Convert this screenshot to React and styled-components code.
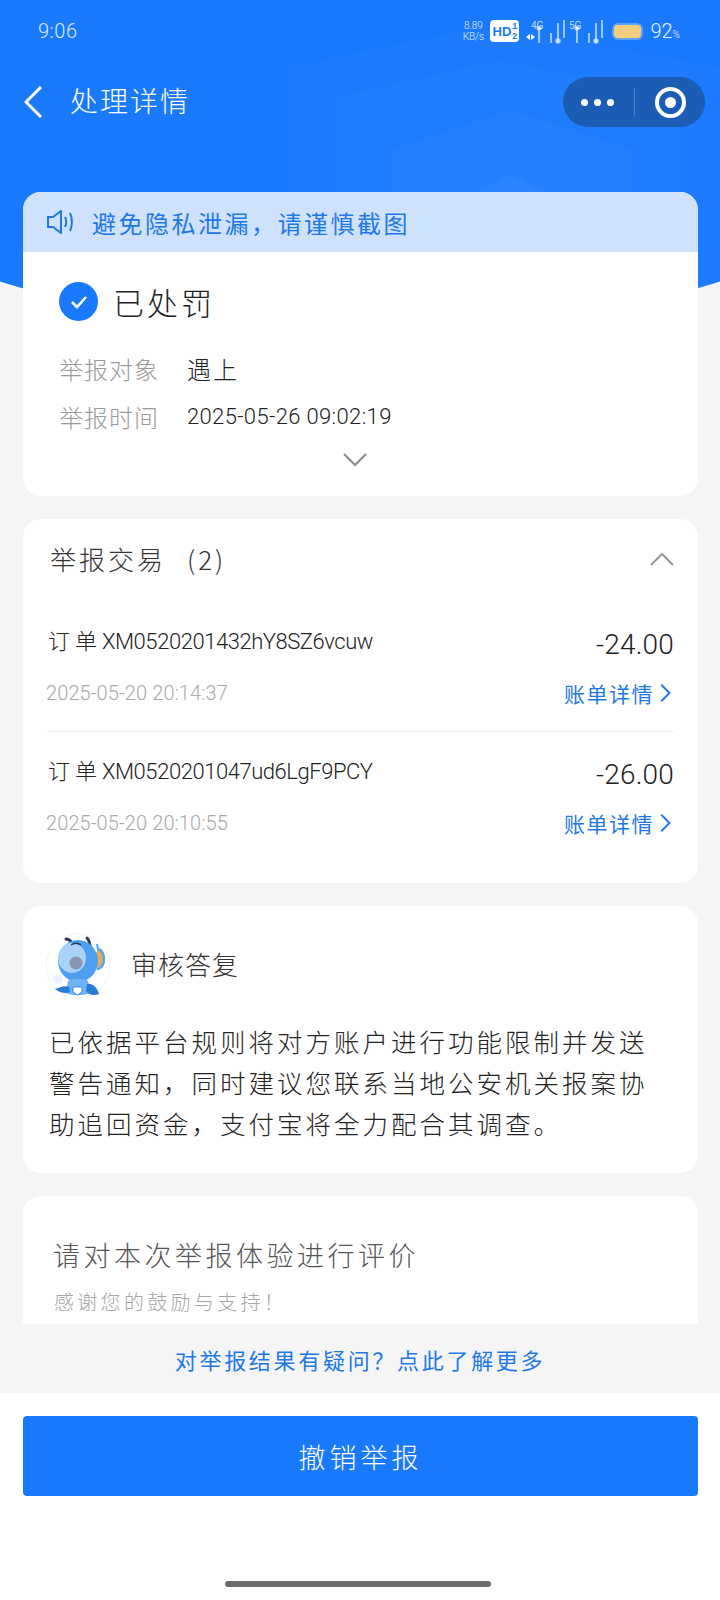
import React from "react";
import styled, { createGlobalStyle } from "styled-components";

const BLUE = "#1a7afe";
const LINK = "#1f78e8";

const GlobalStyle = createGlobalStyle`
  html, body {
    margin: 0;
    padding: 0;
    background: #fff;
  }
  * {
    box-sizing: border-box;
  }
  body {
    font-family: "Noto Sans CJK SC", Roboto, sans-serif;
    font-weight: 300;
    color: #333;
  }
`;

const Page = styled.div`
  position: relative;
  width: 720px;
  height: 1600px;
  overflow: hidden;
  display: flex;
  flex-direction: column;
  background: #f5f5f5;
`;

const HeaderBackdrop = styled.div`
  position: absolute;
  top: 0;
  left: -140px;
  width: 1000px;
  height: 329px;
  background: ${BLUE};
  border-radius: 0 0 50% 50% / 0 0 155px 155px;
  overflow: hidden;
`;

const BackdropShield = styled.svg`
  position: absolute;
  top: 0;
  left: 140px;
`;

const StatusBar = styled.div`
  position: relative;
  height: 62px;
  padding: 0 40px 0 38px;
  display: flex;
  align-items: center;
  justify-content: space-between;
  color: #fff;
`;

const Clock = styled.span`
  font-family: Roboto, sans-serif;
  font-size: 20px;
  font-weight: 300;
  letter-spacing: 0.5px;
  opacity: 0.85;
`;

const StatusIcons = styled.div`
  display: flex;
  align-items: center;
`;

const NetSpeed = styled.span`
  width: 22px;
  margin-right: 6px;
  display: flex;
  flex-direction: column;
  font-family: Roboto, sans-serif;
  font-size: 10px;
  line-height: 11px;
  text-align: center;
  opacity: 0.85;
`;

const HdBadge = styled.span`
  width: 29px;
  height: 22px;
  border-radius: 4px;
  background: #fff;
  color: ${BLUE};
  display: flex;
  align-items: center;
  justify-content: center;
  font-family: "Liberation Sans", sans-serif;
  font-size: 13px;
  font-weight: 700;
`;

const HdFraction = styled.span`
  display: flex;
  flex-direction: column;
  font-size: 9px;
  line-height: 10px;
  margin-left: 1px;
`;

const Signal = styled.svg`
  margin-left: ${(p) => p.$gap}px;
`;

const Battery = styled.span`
  width: 31px;
  height: 17px;
  margin-left: 8px;
  padding: 2px;
  border-radius: 6px;
  background: rgba(255, 255, 255, 0.3);
  display: flex;
`;

const BatteryFill = styled.span`
  flex: 1;
  border-radius: 4px;
  background: #f3cf7d;
`;

const BatteryText = styled.span`
  margin-left: 7px;
  font-family: Roboto, sans-serif;
  font-size: 20px;
  font-weight: 300;
  line-height: 1;
  opacity: 0.9;
  small {
    font-size: 10px;
  }
`;

const NavBar = styled.div`
  position: relative;
  margin-top: 15px;
  height: 50px;
  padding: 0 15px 0 24px;
  display: flex;
  align-items: center;
  color: #fff;
`;

const NavTitle = styled.h1`
  margin: 0 0 4px 28px;
  flex: 1;
  font-size: 28px;
  font-weight: 300;
  letter-spacing: 2px;
`;

const Capsule = styled.div`
  width: 142px;
  height: 50px;
  border-radius: 25px;
  background: #1b5cb4;
  display: grid;
  grid-template-columns: 71px 1px 70px;
  align-items: center;
  justify-items: center;
`;

const CapsuleDots = styled.div`
  display: flex;
  gap: 6px;
  margin-left: -2px;
  span {
    width: 7px;
    height: 7px;
    border-radius: 50%;
    background: #fff;
  }
`;

const CapsuleDivider = styled.div`
  width: 1px;
  height: 28px;
  background: rgba(255, 255, 255, 0.22);
`;

const CapsuleTarget = styled.div`
  width: 31px;
  height: 31px;
  border-radius: 50%;
  border: 4px solid #fff;
  display: flex;
  align-items: center;
  justify-content: center;
  &::after {
    content: "";
    width: 11px;
    height: 11px;
    border-radius: 50%;
    background: #fff;
  }
`;

const Content = styled.main`
  position: relative;
  height: 1132px;
  margin-top: 65px;
  padding: 0 22px 0 23px;
  overflow: hidden;
  display: flex;
  flex-direction: column;
  gap: 23px;
`;

const Card = styled.section`
  flex: none;
  background: #fff;
  border-radius: 18px;
  overflow: hidden;
`;

const Notice = styled.div`
  height: 60px;
  padding-left: 23px;
  display: flex;
  align-items: center;
  gap: 18px;
  background: #cfe2fd;
  color: ${LINK};
  font-size: 24px;
  font-weight: 400;
  letter-spacing: 2.5px;
`;

const StatusBody = styled.div`
  padding: 30px 36px 0;
  height: 244px;
`;

const StatusHead = styled.div`
  display: flex;
  align-items: center;
  gap: 15px;
  margin-bottom: 23px;
  font-size: 31px;
  line-height: 39px;
  letter-spacing: 3px;
  color: #222;
`;

const CheckDot = styled.span`
  width: 39px;
  height: 39px;
  border-radius: 50%;
  background: ${BLUE};
  display: flex;
  align-items: center;
  justify-content: center;
`;

const InfoRow = styled.div`
  height: 48px;
  display: flex;
  align-items: center;
`;

const InfoLabel = styled.span`
  width: 128px;
  font-size: 24px;
  letter-spacing: 1px;
  color: #9a9a9a;
`;

const InfoValue = styled.span`
  font-family: Roboto, "Noto Sans CJK SC", sans-serif;
  font-size: ${(p) => (p.$cjk ? 24 : 22)}px;
  font-weight: 300;
  letter-spacing: ${(p) => (p.$cjk ? 2 : 0.35)}px;
  color: #222;
`;

const Expand = styled.div`
  display: flex;
  justify-content: center;
  margin: 7px 0 0 -12px;
`;

const TradeHead = styled.div`
  height: 83px;
  padding: 0 0 4px 3px;
  display: flex;
  align-items: center;
  font-size: 26px;
  letter-spacing: 3px;
  color: #333;
`;

const TradeCount = styled.span`
  margin-left: 21px;
  flex: 1;
`;

const TradeCard = styled(Card)`
  padding: 0 24px 22px 24px;
`;

const Trade = styled.div`
  padding: 15px 0 12px;
  border-bottom: ${(p) => (p.$divided ? "1px solid #eeeeee" : "none")};
  height: ${(p) => (p.$divided ? 130 : 129)}px;
`;

const TradeLine = styled.div`
  height: ${(p) => p.$h}px;
  display: flex;
  align-items: center;
  justify-content: space-between;
`;

const OrderNo = styled.span`
  margin: 0 0 6px 1px;
  font-family: Roboto, "Noto Sans CJK SC", sans-serif;
  font-size: 22px;
  font-weight: 300;
  letter-spacing: -0.45px;
  color: #222;
`;

const OrderCjk = styled.span`
  font-family: "Noto Sans CJK SC", sans-serif;
  letter-spacing: 5px;
`;

const Amount = styled.span`
  margin-top: 4px;
  font-family: Roboto, sans-serif;
  font-size: 28px;
  font-weight: 300;
  letter-spacing: 0.2px;
  color: #222;
`;

const TradeTime = styled.span`
  font-family: Roboto, sans-serif;
  font-size: 20px;
  font-weight: 300;
  letter-spacing: 0.1px;
  color: #a8a8a8;
  margin-left: -1px;
`;

const BillLink = styled.a`
  display: flex;
  align-items: center;
  gap: 2px;
  font-size: 21px;
  font-weight: 400;
  letter-spacing: 1.5px;
  color: ${LINK};
`;

const ReplyCard = styled(Card)`
  padding: 26px 30px 30px 22px;
`;

const ReplyHead = styled.div`
  display: flex;
  align-items: center;
  gap: 16px;
  margin-bottom: 20px;
  font-size: 26px;
  letter-spacing: 1px;
  color: #333;
`;

const ReplyTitle = styled.span`
  margin-bottom: 6px;
`;

const ReplyText = styled.p`
  margin: 0 0 0 4px;
  font-size: 25.5px;
  line-height: 41px;
  letter-spacing: 3px;
  color: #222;
`;

const RateCard = styled(Card)`
  flex: 1;
  padding: 40px 30px 0;
  border-radius: 18px 18px 0 0;
`;

const RateTitle = styled.div`
  font-size: 27px;
  line-height: 38px;
  letter-spacing: 3.5px;
  color: #555;
`;

const RateHint = styled.div`
  margin: 12px 0 0 1px;
  font-size: 20px;
  line-height: 32px;
  letter-spacing: 3.3px;
  color: #a6a6a6;
`;

const HelpLink = styled.a`
  position: relative;
  height: 69px;
  display: flex;
  align-items: center;
  justify-content: center;
  font-size: 22px;
  font-weight: 400;
  letter-spacing: 2.7px;
  color: ${LINK};
`;

const Footer = styled.footer`
  position: relative;
  flex: 1;
  padding: 23px 22px 13px 23px;
  display: flex;
  flex-direction: column;
  background: #fff;
`;

const RevokeButton = styled.button`
  height: 80px;
  border: 0;
  border-radius: 4px;
  background: ${BLUE};
  color: #fff;
  font-family: inherit;
  font-size: 27px;
  font-weight: 300;
  letter-spacing: 4px;
`;

const HomeBar = styled.div`
  width: 266px;
  height: 6px;
  margin: auto 0 0 202px;
  border-radius: 3px;
  background: #6b6b6b;
`;

// one network: generation label, bars and the glow on the active bars
function SignalMeter({ label, gap, arrows }) {
  const left = arrows ? 13 : 10;
  const bars = [
    [left, 9, 25],
    [left + 12, 15, 25],
    [left + 19, 5, 25],
    [left + 25, 2, 20],
  ];
  return (
    <Signal $gap={gap} width={left + 27} height="26" viewBox={`0 0 ${left + 27} 26`}>
      <text x={left - 8} y="11" fill="#fff" fontSize="10" fontFamily="Roboto, sans-serif">
        {label}
      </text>
      {arrows && (
        <g fill="#fff">
          <path d="M0 19l4-3v6z" />
          <path d="M9 19l-4 3v-6z" />
        </g>
      )}
      {bars.map(([x, y1, y2]) => (
        <line key={x} x1={x} x2={x} y1={y1} y2={y2} stroke="#fff" strokeWidth="1.3" opacity="0.9" />
      ))}
      <circle cx={left} cy="10" r="2.6" fill="#fff" opacity="0.6" />
      <circle cx={left + 19} cy="23" r="2.8" fill="#fff" opacity="0.6" />
    </Signal>
  );
}

// the faint nested shields printed on the blue header
function HeaderShield() {
  return (
    <BackdropShield width="720" height="330" viewBox="0 0 720 330" fill="#fff">
      <path d="M289 67L490 25L720 67V330H289Z" opacity="0.012" />
      <path d="M335 97L500 60L680 97V330H335Z" opacity="0.015" />
      <path d="M390 150L510 110L632 150V330H390Z" opacity="0.02" />
      <path d="M475 192L510 175L545 192V330H475Z" opacity="0.04" />
    </BackdropShield>
  );
}

function Mascot() {
  return (
    <svg width="70" height="68" viewBox="0 0 70 68">
      <circle cx="33" cy="34" r="32" fill="#fff" stroke="#f1f3f6" />
      <path d="M21 7c3 0 6 3 8 7M42 6c2 2 3 5 3 10" fill="none" stroke="#2b3a55" strokeWidth="3" strokeLinecap="round" />
      <path d="M52 12l2 10" stroke="#4d9df2" strokeWidth="2" />
      <ellipse cx="55" cy="27" rx="5" ry="10" fill="#e6ad5a" />
      <path d="M52 17a7 10 0 0 1 0 20" fill="none" stroke="#5aa6ef" strokeWidth="2.5" />
      <ellipse cx="33" cy="29" rx="20" ry="21" fill="#4f9ff0" />
      <ellipse cx="27" cy="26" rx="14" ry="15" fill="#a9d3f9" />
      <circle cx="31" cy="31" r="6.5" fill="#8895ad" />
      <path d="M26 13c3-2 7-2 10 0" fill="none" stroke="#2b3a55" strokeWidth="1.5" />
      <path d="M23 49c4-3 16-3 20 0l2 12c-7 3-18 3-24 0z" fill="#6db2f3" />
      <path d="M24 55c-4-2-10 1-14 2 5 4 11 5 15 3z" fill="#2a79d4" />
      <path d="M42 52c5-1 10 3 12 10-5 2-10 1-13-3z" fill="#2a79d4" />
      <path d="M28 55h9v5l-4.500 3-4.500-3z" fill="#fff" stroke="#3d8ee0" />
      <circle cx="13" cy="47" r="5" fill="#eaf3fc" />
    </svg>
  );
}

function Chevron({ size = 24, points, color = "#8a8a8a", width = 2 }) {
  return (
    <svg width={size} height={size} viewBox="0 0 24 24" fill="none">
      <polyline points={points} stroke={color} strokeWidth={width} />
    </svg>
  );
}

const trades = [
  {
    order: "XM0520201432hY8SZ6vcuw",
    amount: "-24.00",
    time: "2025-05-20 20:14:37",
  },
  {
    order: "XM0520201047ud6LgF9PCY",
    amount: "-26.00",
    time: "2025-05-20 20:10:55",
  },
];

export default function App() {
  return (
    <Page>
      <GlobalStyle />
      <HeaderBackdrop>
        <HeaderShield />
      </HeaderBackdrop>

      <StatusBar>
        <Clock>9:06</Clock>
        <StatusIcons>
          <NetSpeed>
            <span>8.89</span>
            <span>KB/s</span>
          </NetSpeed>
          <HdBadge>
            HD
            <HdFraction>
              <span>1</span>
              <span>2</span>
            </HdFraction>
          </HdBadge>
          <SignalMeter label="4G" gap={7} arrows />
          <SignalMeter label="5G" gap={1} />
          <Battery>
            <BatteryFill />
          </Battery>
          <BatteryText>
            92<small>%</small>
          </BatteryText>
        </StatusIcons>
      </StatusBar>

      <NavBar>
        <svg width="18" height="32" viewBox="0 0 18 32" fill="none">
          <polyline points="17,1 2,16 17,31" stroke="#fff" strokeWidth="3" />
        </svg>
        <NavTitle>处理详情</NavTitle>
        <Capsule>
          <CapsuleDots>
            <span />
            <span />
            <span />
          </CapsuleDots>
          <CapsuleDivider />
          <CapsuleTarget />
        </Capsule>
      </NavBar>

      <Content>
        <Card>
          <Notice>
            <svg width="28" height="24" viewBox="0 0 28 24" fill="none" stroke={LINK} strokeWidth="2">
              <path d="M2 7h5l8-6v22l-8-6H2z" />
              <path d="M19 7c1.500 3 1.500 7 0 10M24 3c2.500 5 2.500 13 0 18" />
            </svg>
            避免隐私泄漏，请谨慎截图
          </Notice>
          <StatusBody>
            <StatusHead>
              <CheckDot>
                <svg width="20" height="16" viewBox="0 0 20 16" fill="none">
                  <polyline points="3,8 8,13 17,3" stroke="#fff" strokeWidth="2.6" />
                </svg>
              </CheckDot>
              已处罚
            </StatusHead>
            <InfoRow>
              <InfoLabel>举报对象</InfoLabel>
              <InfoValue $cjk>遇上</InfoValue>
            </InfoRow>
            <InfoRow>
              <InfoLabel>举报时间</InfoLabel>
              <InfoValue>2025-05-26 09:02:19</InfoValue>
            </InfoRow>
            <Expand>
              <Chevron points="1,7 12,18 23,7" />
            </Expand>
          </StatusBody>
        </Card>

        <TradeCard>
          <TradeHead>
            举报交易
            <TradeCount>(2)</TradeCount>
            <Chevron points="1,18 12,7 23,18" color="#999" />
          </TradeHead>
          {trades.map((trade, i) => (
            <Trade key={trade.order} $divided={i === 0}>
              <TradeLine $h={50}>
                <OrderNo>
                  <OrderCjk>订单</OrderCjk>
                  {trade.order}
                </OrderNo>
                <Amount>{trade.amount}</Amount>
              </TradeLine>
              <TradeLine $h={52}>
                <TradeTime>{trade.time}</TradeTime>
                <BillLink>
                  账单详情
                  <Chevron size={18} points="7,1 18,12 7,23" color={LINK} width={2.6} />
                </BillLink>
              </TradeLine>
            </Trade>
          ))}
        </TradeCard>

        <ReplyCard>
          <ReplyHead>
            <Mascot />
            <ReplyTitle>审核答复</ReplyTitle>
          </ReplyHead>
          <ReplyText>
            已依据平台规则将对方账户进行功能限制并发送警告通知，同时建议您联系当地公安机关报案协助追回资金，支付宝将全力配合其调查。
          </ReplyText>
        </ReplyCard>

        <RateCard>
          <RateTitle>请对本次举报体验进行评价</RateTitle>
          <RateHint>感谢您的鼓励与支持！</RateHint>
        </RateCard>
      </Content>

      <HelpLink>对举报结果有疑问？点此了解更多</HelpLink>

      <Footer>
        <RevokeButton>撤销举报</RevokeButton>
        <HomeBar />
      </Footer>
    </Page>
  );
}
